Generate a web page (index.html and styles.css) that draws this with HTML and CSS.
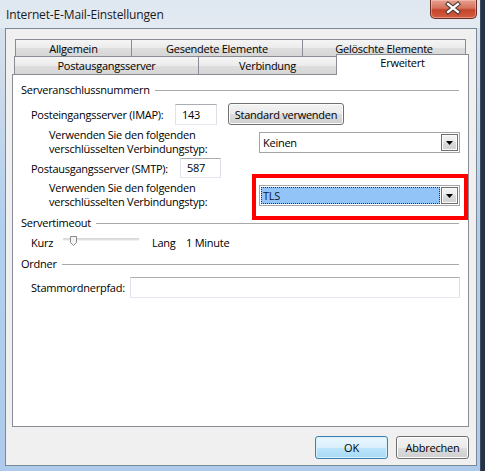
FILE: index.html
```html
<!DOCTYPE html>
<html lang="de">
<head>
  <meta charset="UTF-8" />
  <title>Internet-E-Mail-Einstellungen</title>
  <link rel="stylesheet" href="styles.css">
</head>
<body>

  <div class="window">
    <div class="titlebar">
      <span class="title">Internet-E-Mail-Einstellungen</span>
      <span class="close-btn">
        <svg width="47" height="19" viewBox="0 0 47 19">
          <path d="M18.5 5 L28.5 13 M28.5 5 L18.5 13" stroke="#4a3a38" stroke-width="4.5" stroke-linecap="square" fill="none"/>
          <path d="M18.5 5 L28.5 13 M28.5 5 L18.5 13" stroke="#fff" stroke-width="2.4" stroke-linecap="square" fill="none"/>
        </svg>
      </span>
    </div>

    <div class="client">
      <div class="tabs">
        <div class="tabrow back">
          <div class="tab t-allg">Allgemein</div>
          <div class="tab t-gesendet">Gesendete Elemente</div>
          <div class="tab t-geloescht">Gelöschte Elemente</div>
        </div>
        <div class="tabrow front">
          <div class="tab t-ausgang">Postausgangsserver</div>
          <div class="tab t-verbindung">Verbindung</div>
          <div class="tab t-erweitert active">Erweitert</div>
        </div>
      </div>

      <div class="panel">
        <div class="group-head">Serveranschlussnummern</div>

        <div class="row row-imap">
          <span class="lbl lbl-imap">Posteingangsserver (IMAP):</span>
          <span class="field field-imap">143</span>
          <button class="btn btn-std">Standard verwenden</button>
        </div>

        <div class="enc-row">
          <span class="enc-lbl">Verwenden Sie den folgenden<br>verschlüsselten Verbindungstyp:</span>
          <div class="combo">
            <span class="combo-text">Keinen</span>
            <span class="drop"><svg width="7" height="4" viewBox="0 0 7 4"><path d="M0 0 H7 L3.5 4 Z" fill="#000"/></svg></span>
          </div>
        </div>

        <div class="row row-smtp">
          <span class="lbl lbl-smtp">Postausgangsserver (SMTP):</span>
          <span class="field field-smtp">587</span>
        </div>

        <div class="enc-row">
          <span class="enc-lbl">Verwenden Sie den folgenden<br>verschlüsselten Verbindungstyp:</span>
          <div class="combo marked">
            <span class="combo-text selected">TLS</span>
            <span class="drop"><svg width="7" height="4" viewBox="0 0 7 4"><path d="M0 0 H7 L3.5 4 Z" fill="#000"/></svg></span>
          </div>
        </div>

        <div class="group-head head-timeout">Servertimeout</div>

        <div class="row row-slider">
          <span class="lbl lbl-kurz">Kurz</span>
          <svg class="slider" width="76" height="16" viewBox="0 0 76 16">
            <rect x="0" y="4.5" width="76" height="1" fill="#b4b4b4"/>
            <rect x="0" y="5.5" width="76" height="1" fill="#e6e6e6"/>
            <path d="M7.5 2.5 H13.5 V8.5 L10.5 11.5 L7.5 8.5 Z" fill="#f4f4f4" stroke="#8a8a8a"/>
          </svg>
          <span class="lbl lbl-lang">Lang</span>
          <span class="lbl">1 Minute</span>
        </div>

        <div class="group-head head-ordner">Ordner</div>

        <div class="row row-path">
          <span class="lbl lbl-path">Stammordnerpfad:</span>
          <span class="field field-path"></span>
        </div>
      </div>

      <div class="actions">
        <button class="btn btn-dlg default">OK</button>
        <button class="btn btn-dlg">Abbrechen</button>
      </div>
    </div>
  </div>

</body>
</html>
```

FILE: styles.css
```css
* { box-sizing: border-box; }

html, body {
  margin: 0;
  padding: 0;
}

body {
  width: 485px;
  height: 471px;
  overflow: hidden;
  background: #24334a;
  font-family: "Open Sans", "Noto Sans", sans-serif;
  font-size: 11px;
  letter-spacing: -0.25px;
  color: #000;
}

/* window frame + title bar */
.window {
  width: 481px;
  height: 471px;
  border-right: 1px solid #3e4b5c;
  background: linear-gradient(to bottom, #dce5ef 0, #cddbea 80px, #b2cfee 220px, #aecbeb 100%);
  display: flex;
  flex-direction: column;
}

.titlebar {
  height: 28px;
  flex: none;
  display: flex;
  align-items: center;
  padding-left: 6px;
  background: linear-gradient(to bottom, #dfe7f0, #e3eaf2);
}

.title {
  font-size: 12px;
  letter-spacing: -0.15px;
  color: #1a1a1a;
}

.close-btn {
  margin-left: auto;
  margin-right: 3px;
  align-self: flex-start;
  width: 47px;
  height: 19px;
  border: 1px solid #6b2d23;
  border-top: none;
  border-radius: 0 0 5px 5px;
  background: linear-gradient(to bottom, #e7a08f 0%, #d4715c 45%, #c4452c 55%, #d35d40 100%);
  box-shadow: inset 0 0 0 1px rgba(255, 210, 200, 0.45);
  display: flex;
}

.close-btn svg { display: block; margin: -1px 0 0 -1px; }

/* dialog client area */
.client {
  margin-left: 5px;
  width: 472px;
  height: 438px;
  flex: none;
  border: 1px solid #7a8794;
  background: #f0f0f0;
  padding-top: 10px;
  display: flex;
  flex-direction: column;
}

.tabs { display: flex; flex-direction: column; }

.tabrow { display: flex; }
.tabrow.back { margin-left: 9px; height: 17px; }
.tabrow.front { margin-left: 8px; height: 18px; align-items: flex-end; }

.tab {
  border: 1px solid #898c95;
  border-bottom: none;
  background: linear-gradient(to bottom, #f5f5f5 0%, #ebebeb 50%, #dedede 50%, #d6d6d6 100%);
  text-align: center;
  height: 18px;
  line-height: 17px;
  margin-left: -1px;
}

.tabrow .tab:first-child { margin-left: 0; }

.tabrow.back .tab { height: 17px; }

.t-allg { width: 117px; }
.t-gesendet { width: 172px; }
.t-geloescht { width: 164px; }
.t-ausgang { width: 185px; }
.t-verbindung { width: 139px; }

.tab.active {
  width: 133px;
  height: 21px;
  margin-bottom: -1px;
  background: #fff;
  line-height: 16px;
  position: relative;
  z-index: 1;
}

.panel {
  margin-left: 6px;
  width: 457px;
  height: 353px;
  border: 1px solid #898c95;
  background: #fff;
  padding: 7px 8px 0 8px;
}

/* group headings with the etched line */
.group-head {
  display: flex;
  align-items: center;
  height: 15px;
  line-height: 15px;
}

.group-head::after {
  content: "";
  flex: 1;
  border-top: 1px solid #a9a9a9;
  margin: 1px 1px 0 5px;
}

.head-timeout { margin-top: 6px; }
.head-ordner { margin-top: 6px; }

.row {
  display: flex;
  align-items: center;
  padding-left: 10px;
}

.lbl { white-space: nowrap; }

.row-imap { margin-top: 6px; height: 22px; }
.lbl-imap { width: 144px; }

.row-smtp { margin-top: 2px; height: 20px; }
.lbl-smtp { width: 149px; }

.row-slider { margin-top: 4px; height: 16px; }
.lbl-kurz { width: 32px; }
.slider { display: block; margin-right: 13px; }
.lbl-lang { width: 34px; }

.row-path { margin-top: 6px; height: 21px; }
.lbl-path { width: 99px; }

.field {
  display: block;
  height: 21px;
  border: 1px solid;
  border-color: #abadb3 #dbdfe6 #e3e9ef #e2e3ea;
  background: #fff;
  padding-left: 6px;
  line-height: 19px;
}

.field-imap { width: 42px; }
.field-smtp { width: 41px; height: 20px; line-height: 18px; }
.field-path { flex: 1; }

.btn {
  font-family: inherit;
  font-size: 11px;
  letter-spacing: inherit;
  color: #000;
  height: 22px;
  padding: 0;
  border: 1px solid #707070;
  border-radius: 3px;
  background: linear-gradient(to bottom, #f2f2f2 0%, #ebebeb 50%, #dddddd 50%, #cfcfcf 100%);
  box-shadow: inset 0 0 0 1px #fcfcfc;
}

.btn-std { width: 116px; margin-left: 11px; }

/* "Verwenden Sie ..." rows with a combo box */
.enc-row {
  display: flex;
  align-items: center;
  height: 28px;
  margin-top: 3px;
}

.enc-lbl {
  width: 238px;
  padding-left: 28px;
  line-height: 14px;
  white-space: nowrap;
}

.combo {
  width: 201px;
  height: 21px;
  border: 1px solid #a5a5a5;
  background: #fff;
  padding: 1px;
  display: flex;
  align-items: stretch;
}

.combo-text {
  flex: 1;
  padding-left: 2px;
  line-height: 17px;
  margin-right: 1px;
}

.combo-text.selected {
  background: #93c4f7;
  outline: 1px dotted #333;
  outline-offset: -1px;
  color: #0e1a33;
}

.drop {
  width: 17px;
  border: 1px solid #6f6f6f;
  background: linear-gradient(to bottom, #f4f4f4 0%, #e9e9e9 50%, #dcdcdc 50%, #d0d0d0 100%);
  box-shadow: inset 0 0 0 1px #fbfbfb;
  display: flex;
  align-items: center;
  justify-content: center;
}

.drop svg { display: block; margin-top: 1px; }

/* red annotation frame around the TLS box */
.combo.marked { position: relative; }

.combo.marked::after {
  content: "";
  position: absolute;
  left: -8px;
  top: -12px;
  right: -9px;
  bottom: -15px;
  border: 4px solid #f00;
}

/* OK / Abbrechen */
.actions {
  display: flex;
  justify-content: flex-end;
  gap: 8px;
  margin-top: 9px;
  padding-right: 7px;
}

.btn-dlg { width: 73px; height: 23px; }

.btn.default {
  border-color: #3c7fb1;
  background: linear-gradient(to bottom, #eaf6fd 0%, #d9f0fc 50%, #bee6fd 50%, #a7d9f5 100%);
  box-shadow: inset 0 0 0 1px #d8f0fb;
}
```
